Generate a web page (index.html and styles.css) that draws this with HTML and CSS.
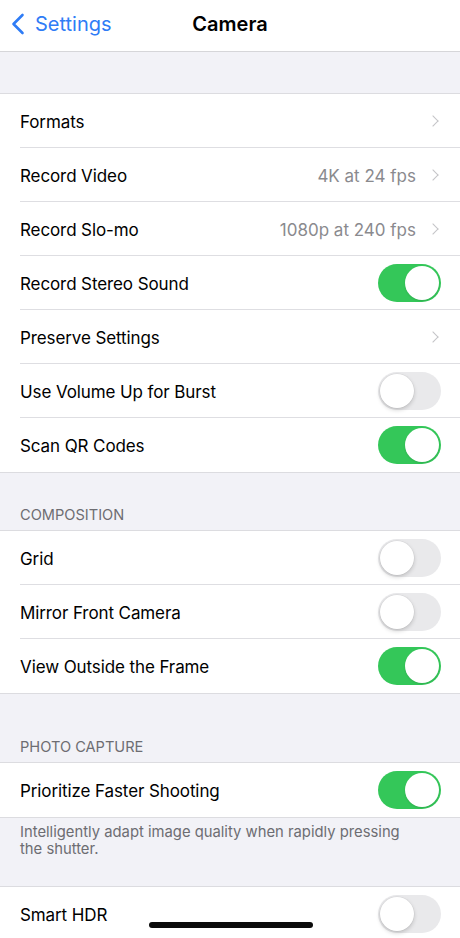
FILE: index.html
```html
<!DOCTYPE html>
<html>
<head>
<meta charset="utf-8">
<link rel="stylesheet" href="styles.css">
</head>
<body>
<div class="screen">
  <header class="nav">
    <div class="back">
      <svg class="back-icon" width="14" height="22" viewBox="0 0 14 22"><path d="M11.5 2 L2.5 11 L11.5 20" fill="none" stroke="#2f7cf6" stroke-width="2.6" stroke-linecap="round" stroke-linejoin="round"/></svg>
      <span>Settings</span>
    </div>
    <div class="title">Camera</div>
  </header>
  <div class="spacer top"></div>
  <section class="group">
    <div class="row"><span class="label">Formats</span><span class="acc"><span class="chev"></span></span></div>
    <div class="row"><span class="label">Record Video</span><span class="acc"><span class="value">4K at 24 fps</span><span class="chev"></span></span></div>
    <div class="row"><span class="label">Record Slo-mo</span><span class="acc"><span class="value">1080p at 240 fps</span><span class="chev"></span></span></div>
    <div class="row"><span class="label">Record Stereo Sound</span><span class="toggle on"></span></div>
    <div class="row"><span class="label">Preserve Settings</span><span class="acc"><span class="chev"></span></span></div>
    <div class="row"><span class="label">Use Volume Up for Burst</span><span class="toggle"></span></div>
    <div class="row"><span class="label">Scan QR Codes</span><span class="toggle on"></span></div>
  </section>
  <div class="section-head h1">COMPOSITION</div>
  <section class="group">
    <div class="row"><span class="label">Grid</span><span class="toggle"></span></div>
    <div class="row"><span class="label">Mirror Front Camera</span><span class="toggle"></span></div>
    <div class="row"><span class="label">View Outside the Frame</span><span class="toggle on"></span></div>
  </section>
  <div class="section-head h2">PHOTO CAPTURE</div>
  <section class="group">
    <div class="row"><span class="label">Prioritize Faster Shooting</span><span class="toggle on"></span></div>
  </section>
  <div class="footnote">Intelligently adapt image quality when rapidly pressing the shutter.</div>
  <section class="group">
    <div class="row"><span class="label">Smart HDR</span><span class="toggle"></span></div>
  </section>
  <div class="home-indicator"></div>
</div>
</body>
</html>
```
FILE: styles.css
```css
* { box-sizing: border-box; }
html, body { margin: 0; padding: 0; }
body {
  width: 460px;
  height: 938px;
  overflow: hidden;
  background: #f2f2f7;
  font-family: "Inter", "Noto Sans", sans-serif;
  color: #000;
}
.screen {
  position: relative;
  width: 460px;
  height: 938px;
  display: flex;
  flex-direction: column;
}
.nav {
  height: 52px;
  flex: none;
  background: #fff;
  border-bottom: 1px solid #d6d6d9;
  display: flex;
  align-items: center;
  position: relative;
}
.back {
  display: flex;
  align-items: center;
  gap: 10px;
  padding-left: 11px;
  color: #2f7cf6;
  font-size: 20px;
  margin-top: -3px;
}
.title {
  position: absolute;
  left: 0; right: 0;
  top: 12px;
  text-align: center;
  font-size: 20px;
  font-weight: 600;
  pointer-events: none;
}
.spacer.top { height: 42px; flex: none; }
.group {
  background: #fff;
  box-shadow: 0 -1px 0 #dcdce0, 0 1px 0 #dcdce0;
  flex: none;
  position: relative;
}
.row {
  height: 54px;
  display: flex;
  align-items: center;
  justify-content: space-between;
  margin-left: 20px;
  padding-right: 19px;
  border-bottom: 1px solid #dedee2;
  font-size: 17px;
}
.row:last-child { border-bottom: none; }
.label { letter-spacing: -0.1px; padding-top: 2px; }
.acc { display: flex; align-items: center; gap: 13px; }
.value { color: #8a8a8e; padding-top: 2px; }
.chev {
  width: 8px; height: 8px;
  border-right: 1.6px solid #c4c4c7;
  border-top: 1.6px solid #c4c4c7;
  transform: rotate(45deg);
  margin-right: 4px;
}
.toggle {
  width: 63px; height: 38px;
  border-radius: 19px;
  background: #e9e9eb;
  position: relative;
  flex: none;
}
.toggle::after {
  content: "";
  position: absolute;
  top: 2px; left: 2px;
  width: 34px; height: 34px;
  border-radius: 50%;
  background: #fff;
  box-shadow: 0 2px 4px rgba(0,0,0,0.18), 0 0 0 0.5px rgba(0,0,0,0.06);
}
.toggle.on { background: #34c759; }
.toggle.on::after { left: 27px; box-shadow: 0 1px 2px rgba(0,0,0,0.12); }
.section-head {
  color: #6d6d72;
  font-size: 14.6px;
  padding-left: 20px;
  flex: none;
  display: flex;
  align-items: flex-end;
  padding-bottom: 7px;
}
.section-head.h1 { height: 59px; }
.section-head.h2 { height: 70px; }
.footnote {
  color: #6d6d72;
  font-size: 14.8px;
  line-height: 17px;
  padding: 7px 50px 0 20px;
  height: 70px;
  flex: none;
}
.home-indicator {
  position: absolute;
  left: 149px;
  top: 922px;
  width: 164px;
  height: 6px;
  border-radius: 3px;
  background: #0b0b0b;
}
```
